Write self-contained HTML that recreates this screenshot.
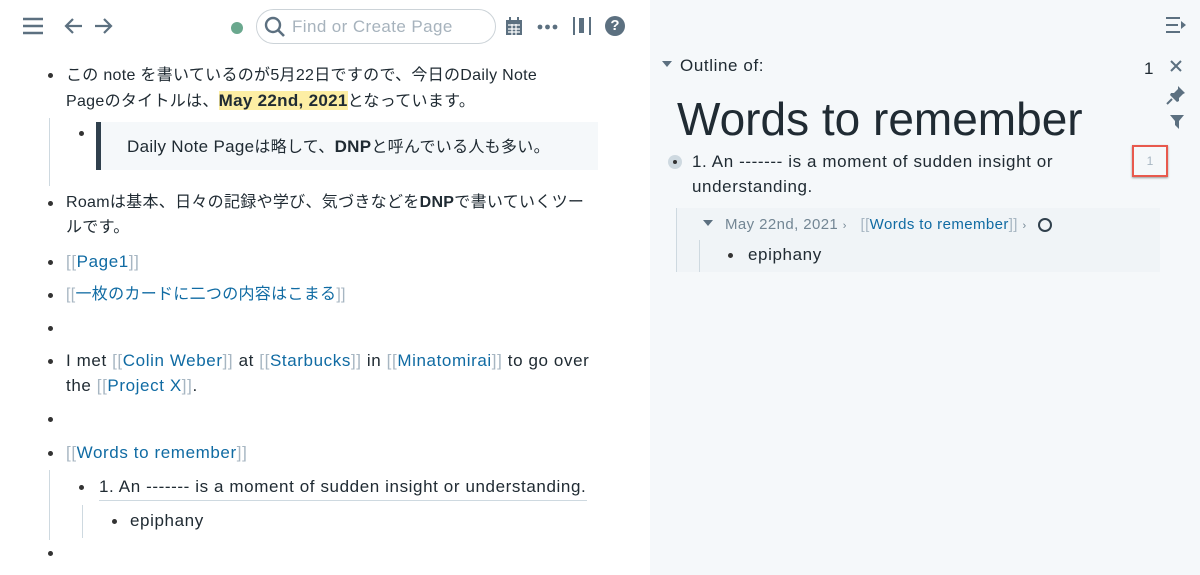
<!DOCTYPE html>
<html><head><meta charset="utf-8"><style>
*{margin:0;padding:0;box-sizing:border-box}
body{width:1200px;height:575px;overflow:hidden;font-family:"Liberation Sans","Noto Sans CJK JP",sans-serif;color:#202b33;font-size:16px;position:relative;background:#fff}
.left{position:absolute;left:0;top:0;width:650px;height:575px;background:#fff}
.right{position:absolute;left:650px;top:0;width:550px;height:575px;background:#f5f8fa}
.a{position:absolute}
.t{position:absolute;line-height:25px;white-space:nowrap}
.L{font-size:17px;letter-spacing:0.6px}
.M{letter-spacing:0.3px}
.dot{position:absolute;width:5px;height:5px;border-radius:50%;background:#333}
.lk{color:#106ba3}.br{color:#a7b6c2}
.vl{position:absolute;width:1px;background:#ced9e0}
</style></head><body>
<div class="left">
<svg class="a" style="left:22px;top:17px" width="22" height="18"><path d="M1 2h20M1 9h20M1 16h20" stroke="#5c7080" stroke-width="2.4"/></svg>
<svg class="a" style="left:64px;top:17px" width="20" height="18"><path d="M18 9H3M9 2L2 9l7 7" stroke="#5c7080" stroke-width="2.2" fill="none"/></svg>
<svg class="a" style="left:93px;top:17px" width="20" height="18"><path d="M2 9h15M11 2l7 7-7 7" stroke="#5c7080" stroke-width="2.2" fill="none"/></svg>
<div class="a" style="left:231px;top:22px;width:12px;height:12px;border-radius:50%;background:#6aa88e"></div>
<div class="a" style="left:256px;top:9px;width:240px;height:35px;border:1px solid #ccd3d8;border-radius:18px"></div>
<svg class="a" style="left:263px;top:15px" width="24" height="24"><circle cx="10" cy="10" r="7" stroke="#5c7080" stroke-width="2.4" fill="none"/><path d="M15 15l6 6" stroke="#5c7080" stroke-width="2.6"/></svg>
<div class="t" style="left:292px;top:14px;font-size:17px;letter-spacing:0.4px;color:#a7b3bd">Find or Create Page</div>
<svg class="a" style="left:505px;top:16px" width="18" height="20"><rect x="1" y="4" width="16" height="15" fill="#5c7080"/><path d="M5 1v5M13 1v5" stroke="#5c7080" stroke-width="2"/><path d="M3 9h12M3 13h12M3 16h12M7 8v11M11 8v11" stroke="#fff" stroke-width="1.2"/></svg>
<svg class="a" style="left:537px;top:23px" width="22" height="8"><circle cx="3" cy="4" r="2.4" fill="#5c7080"/><circle cx="10.5" cy="4" r="2.4" fill="#5c7080"/><circle cx="18" cy="4" r="2.4" fill="#5c7080"/></svg>
<svg class="a" style="left:572px;top:16px" width="20" height="20"><path d="M2 1v18M18 1v18" stroke="#5c7080" stroke-width="2"/><rect x="7" y="2" width="5" height="15" fill="#5c7080"/></svg>
<div class="a" style="left:605px;top:16px;width:20px;height:20px;border-radius:50%;background:#5c7080;color:#fff;font-weight:bold;font-size:15px;text-align:center;line-height:20px">?</div>

<div class="dot" style="left:48px;top:73px"></div>
<div class="t M" style="left:66px;top:63px">この note を書いているのが5月22日ですので、今日のDaily Note</div>
<div class="t M" style="left:66px;top:88px">Pageのタイトルは、<b style="background:#fdeea4;font-size:17px">May 22nd, 2021</b>となっています。</div>
<div class="vl" style="left:49px;top:118px;height:68px"></div>
<div class="dot" style="left:79px;top:131px"></div>
<div class="a" style="left:96px;top:122px;width:502px;height:48px;background:#f5f8fa;border-left:5px solid #30404d"></div>
<div class="t M" style="left:127px;top:134px"><span style="font-size:17px">Daily Note Page</span>は略して、<b style="font-size:17px">DNP</b>と呼んでいる人も多い。</div>
<div class="dot" style="left:48px;top:201px"></div>
<div class="t M" style="left:66px;top:190px">Roamは基本、日々の記録や学び、気づきなどを<b>DNP</b>で書いていくツー</div>
<div class="t M" style="left:66px;top:215px">ルです。</div>
<div class="dot" style="left:48px;top:260px"></div>
<div class="t L" style="left:66px;top:249px"><span class="br">[[</span><span class="lk">Page1</span><span class="br">]]</span></div>
<div class="dot" style="left:48px;top:293px"></div>
<div class="t M" style="left:66px;top:282px"><span class="br">[[</span><span class="lk">一枚のカードに二つの内容はこまる</span><span class="br">]]</span></div>
<div class="dot" style="left:48px;top:326px"></div>
<div class="dot" style="left:48px;top:359px"></div>
<div class="t L" style="left:66px;top:348px">I met <span class="br">[[</span><span class="lk">Colin Weber</span><span class="br">]]</span> at <span class="br">[[</span><span class="lk">Starbucks</span><span class="br">]]</span> in <span class="br">[[</span><span class="lk">Minatomirai</span><span class="br">]]</span> to go over</div>
<div class="t L" style="left:66px;top:373px">the <span class="br">[[</span><span class="lk">Project X</span><span class="br">]]</span>.</div>
<div class="dot" style="left:48px;top:417px"></div>
<div class="dot" style="left:48px;top:451px"></div>
<div class="t L" style="left:66px;top:440px"><span class="br">[[</span><span class="lk">Words to remember</span><span class="br">]]</span></div>
<div class="vl" style="left:49px;top:470px;height:70px"></div>
<div class="dot" style="left:79px;top:485px"></div>
<div class="t L" style="left:99px;top:474px">1. An ------- is a moment of sudden insight or understanding.</div>
<div class="a" style="left:99px;top:500px;width:488px;height:1px;background:#ced9e0"></div>
<div class="vl" style="left:82px;top:505px;height:33px"></div>
<div class="dot" style="left:112px;top:519px"></div>
<div class="t L" style="left:130px;top:508px">epiphany</div>
<div class="dot" style="left:48px;top:551px"></div>
</div>

<div class="right">
<svg class="a" style="left:515px;top:16px" width="22" height="18"><path d="M1 2h14M1 9h12M1 16h14" stroke="#5c7080" stroke-width="2"/><path d="M16 5l5 4-5 4z" fill="#5c7080"/></svg>
<svg class="a" style="left:12px;top:61px" width="10" height="8"><path d="M0 0h10L5 6z" fill="#5c7080"/></svg>
<div class="t L" style="left:30px;top:53px">Outline of:</div>
<div class="t L" style="left:494px;top:56px">1</div>
<svg class="a" style="left:519px;top:59px" width="14" height="14"><path d="M2 2l10 10M12 2L2 12" stroke="#5c7080" stroke-width="2"/></svg>
<svg class="a" style="left:516px;top:85px" width="20" height="20"><path d="M12 1l7 7-2 1-4 4 0 3-2 1-7-7 1-2 3 0 4-4z" fill="#5c7080"/><path d="M6 14l-5 5" stroke="#5c7080" stroke-width="2"/></svg>
<svg class="a" style="left:520px;top:114px" width="14" height="16"><path d="M0 1h14L9 7v8L5 11V7z" fill="#5c7080"/></svg>
<div class="t" style="left:27px;top:92px;font-size:46px;line-height:54px;font-weight:500;color:#202b33">Words to remember</div>
<div class="a" style="left:18px;top:155px;width:14px;height:14px;border-radius:50%;background:#ced9e0"></div>
<div class="a" style="left:23px;top:160px;width:4px;height:4px;border-radius:50%;background:#333"></div>
<div class="t L" style="left:42px;top:149px">1. An ------- is a moment of sudden insight or</div>
<div class="t L" style="left:42px;top:174px">understanding.</div>
<div class="a" style="left:482px;top:145px;width:36px;height:32px;border:2px solid #e8594d;background:#f5f8fa;color:#a7b6c2;font-size:12px;text-align:center;line-height:28px;box-shadow:0 1px 2px #999">1</div>
<div class="a" style="left:26px;top:208px;width:484px;height:64px;background:#f0f4f7"></div>
<div class="vl" style="left:26px;top:208px;height:64px"></div>
<svg class="a" style="left:53px;top:220px" width="10" height="8"><path d="M0 0h10L5 6z" fill="#5c7080"/></svg>
<div class="t" style="left:75px;top:212px;font-size:15px;letter-spacing:0.4px;color:#738694">May 22nd, 2021 <span style="font-size:11px">›</span> &nbsp;&nbsp;<span class="br">[[</span><span class="lk">Words to remember</span><span class="br">]]</span> <span style="font-size:11px">›</span></div>
<div class="a" style="left:388px;top:218px;width:14px;height:14px;border:2px solid #30404d;border-radius:50%"></div>
<div class="vl" style="left:49px;top:240px;height:32px"></div>
<div class="dot" style="left:78px;top:253px"></div>
<div class="t L" style="left:98px;top:242px">epiphany</div>
</div>
</body></html>
